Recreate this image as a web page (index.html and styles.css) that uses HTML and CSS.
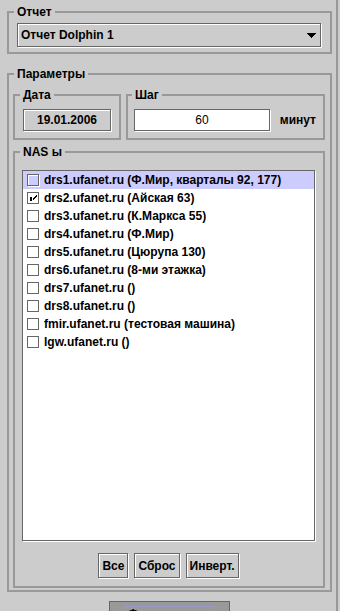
FILE: index.html
```html
<!DOCTYPE html>
<html lang="ru">
  <head>
    <meta charset="UTF-8" />
    <meta name="viewport" content="width=device-width, initial-scale=1.0" />
    <title>Отчет</title>
    <link rel="stylesheet" href="styles.css">
  </head>
  <body>
    <div class="frame">
      <fieldset class="group group-report">
        <legend>Отчет</legend>
        <div class="combo">
          <span class="combo-text">Отчет Dolphin 1</span>
          <svg class="combo-arrow" width="10" height="5" viewBox="0 0 10 5"><polygon points="0,0 10,0 5,5" /></svg>
        </div>
      </fieldset>

      <fieldset class="group group-params">
        <legend>Параметры</legend>
        <div class="params-row">
          <fieldset class="group group-date">
            <legend>Дата</legend>
            <div class="field field-date">19.01.2006</div>
          </fieldset>
          <fieldset class="group group-step">
            <legend>Шаг</legend>
            <div class="step-row">
              <div class="field field-step">60</div>
              <span class="unit">минут</span>
            </div>
          </fieldset>
        </div>

        <fieldset class="group group-nas">
          <legend>NAS ы</legend>
          <ul class="nas-list">
            <li class="nas-item selected"><span class="check"></span>drs1.ufanet.ru (Ф.Мир, кварталы 92, 177)</li>
            <li class="nas-item"><span class="check"><svg width="10" height="10" viewBox="0 0 10 10"><rect x="2" y="4" width="2" height="4" /><path d="M8.5 2.5 L4.5 6.5 M8.5 3.5 L4.5 7.5" /></svg></span>drs2.ufanet.ru (Айская 63)</li>
            <li class="nas-item"><span class="check"></span>drs3.ufanet.ru (К.Маркса 55)</li>
            <li class="nas-item"><span class="check"></span>drs4.ufanet.ru (Ф.Мир)</li>
            <li class="nas-item"><span class="check"></span>drs5.ufanet.ru (Цюрупа 130)</li>
            <li class="nas-item"><span class="check"></span>drs6.ufanet.ru (8-ми этажка)</li>
            <li class="nas-item"><span class="check"></span>drs7.ufanet.ru ()</li>
            <li class="nas-item"><span class="check"></span>drs8.ufanet.ru ()</li>
            <li class="nas-item"><span class="check"></span>fmir.ufanet.ru (тестовая машина)</li>
            <li class="nas-item"><span class="check"></span>lgw.ufanet.ru ()</li>
          </ul>
          <div class="nas-buttons">
            <button class="btn">Все</button>
            <button class="btn">Сброс</button>
            <button class="btn">Инверт.</button>
          </div>
        </fieldset>
      </fieldset>

      <div class="footer">
        <button class="btn btn-main"><span class="focus">Формировать</span></button>
      </div>
    </div>
  </body>
</html>
```

FILE: styles.css
```css
* {
  box-sizing: border-box;
}
html,
body {
  margin: 0;
}
body {
  background-color: #cccccc;
  color: #000;
  font: bold 12px "Liberation Sans", Arial, sans-serif;
  height: 611px;
  overflow: hidden;
}
.frame {
  width: 338px;
  height: 611px;
  padding: 5px 4px 0 7px;
  border-right: 2px solid #999999;
}

/* titled borders */
.group {
  margin: 0;
  min-width: 0;
  padding: 0;
  border: 2px solid #999999;
}
.group legend {
  padding: 0 3px;
  line-height: 14px;
}
.group-report {
  padding: 4px 9px 5px 8px;
}
.group-report legend {
  margin-left: -3px;
}
.group-params {
  margin-top: 13px;
  padding: 7px 5px 2px 4px;
}
.group-params > legend {
  margin-left: 1px;
}
.params-row {
  display: grid;
  grid-template-columns: 108px 1fr;
  gap: 5px;
}
.group-date {
  padding: 7px 8px 7px 8px;
}
.group-date legend {
  margin-left: -3px;
}
.group-step {
  padding: 7px 7px 7px 6px;
}
.group-step legend {
  margin-left: -2px;
}
.group-nas {
  margin-top: 5px;
  padding: 11px 8px 8px 7px;
}
.group-nas legend {
  margin-left: -2px;
}

/* combo box */
.combo {
  height: 24px;
  padding: 0 4px 0 3px;
  border: 1px solid #666666;
  box-shadow: inset 1px 1px #fff, 1px 1px #fff;
  display: flex;
  align-items: center;
  justify-content: space-between;
}
.combo-arrow {
  shape-rendering: crispEdges;
}

/* text fields */
.field {
  height: 22px;
  border: 1px solid #666666;
  box-shadow: inset 1px 1px #fff, 1px 1px #fff;
  display: flex;
  align-items: center;
  justify-content: center;
}
.field-date {
  background-color: #cccccc;
}
.step-row {
  display: flex;
  align-items: center;
  gap: 10px;
}
.field-step {
  flex: 1;
  background-color: #fff;
  font-weight: normal;
}

/* list of NAS */
.nas-list {
  list-style: none;
  margin: 0;
  padding: 0;
  height: 371px;
  background-color: #fff;
  border: 1px solid #666666;
  box-shadow: 1px 1px #fff;
}
.nas-item {
  height: 18px;
  padding-left: 4px;
  display: flex;
  align-items: center;
  gap: 5px;
  white-space: nowrap;
}
.selected {
  background-color: #ccccff;
}
.check {
  flex: none;
  width: 12px;
  height: 12px;
  border: 1px solid #666666;
  box-shadow: inset 1px 1px #fff, 1px 1px #fff;
}
.check svg {
  display: block;
  shape-rendering: crispEdges;
}
.check path {
  stroke: #000;
  stroke-width: 1;
}

/* buttons */
.nas-buttons {
  display: flex;
  justify-content: center;
  gap: 6px;
  margin-top: 12px;
}
.btn {
  height: 25px;
  margin: 0;
  padding: 0 3px;
  font: inherit;
  color: #000;
  background-color: #cccccc;
  border: 1px solid #666666;
  border-radius: 0;
  box-shadow: inset 1px 1px #fff, 1px 1px #fff;
}
.footer {
  display: flex;
  justify-content: center;
  margin-top: 9px;
}
.btn-main {
  width: 121px;
  background-color: #999999;
  box-shadow: none;
}
.focus {
  display: inline-block;
  padding: 0 2px;
  line-height: 14px;
  border: 1px solid #9999cc;
}
```
